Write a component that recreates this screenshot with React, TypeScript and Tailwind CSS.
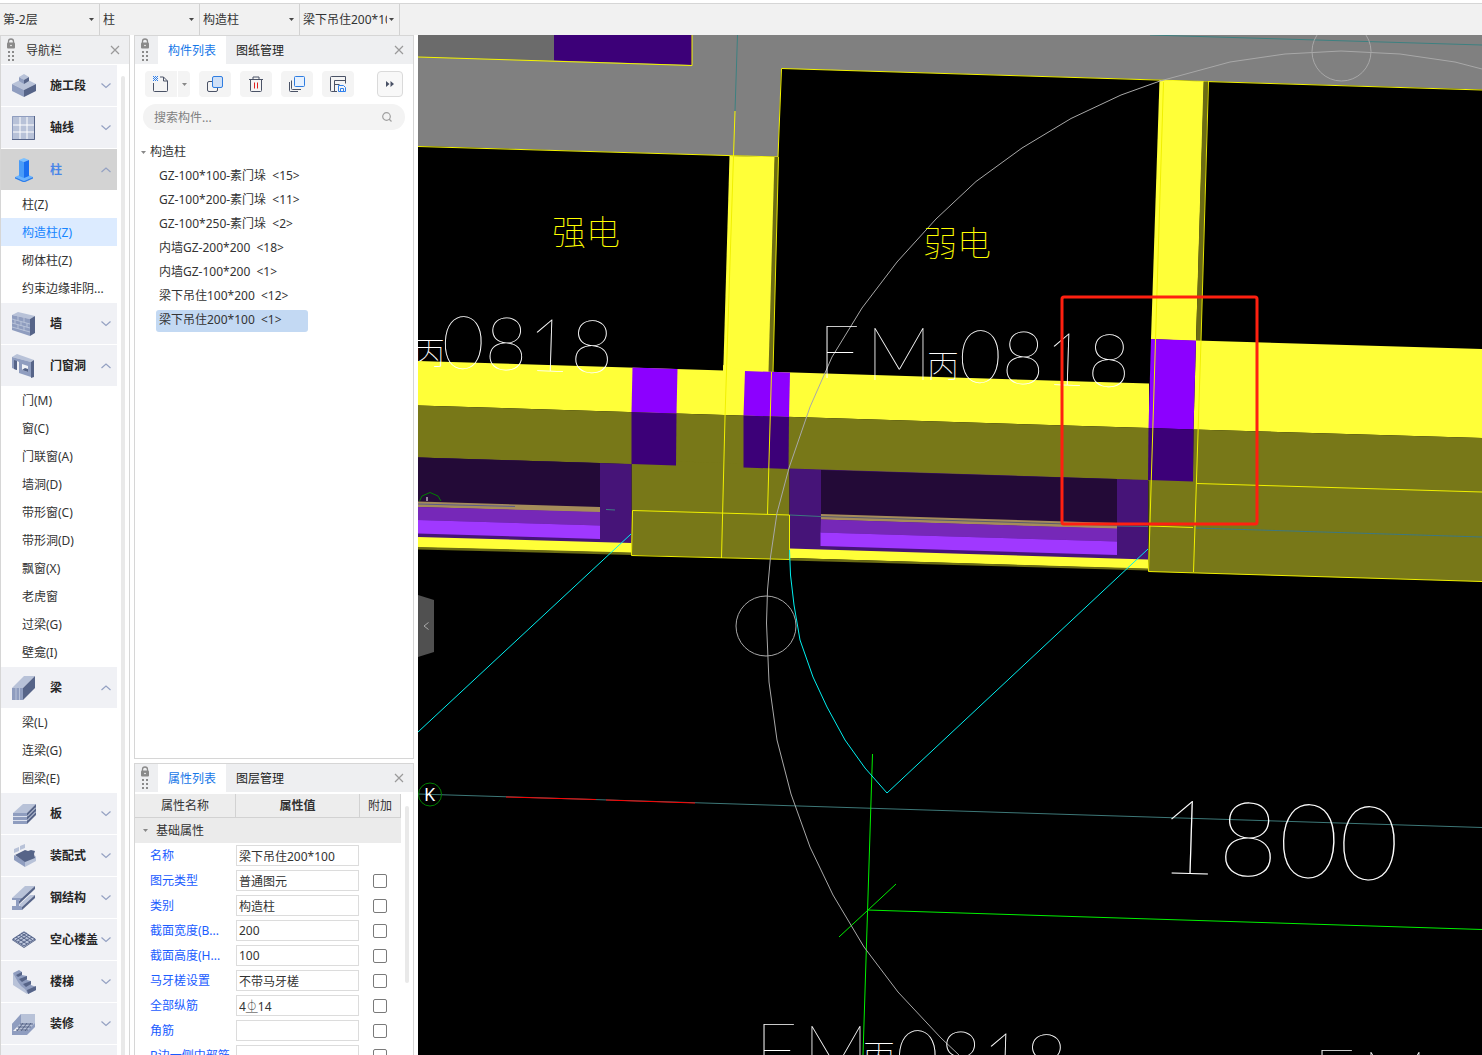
import React from "react";

type NavGroup = {
  name: string;
  icon: React.ReactNode;
  open?: boolean;
  active?: boolean;
  items?: string[];
};

const LIGHT = "#b8c2d8";
const MID = "#8f9dbf";
const DARK = "#566488";

const SectionIcon = () => (
  <svg viewBox="0 0 24 24" className="size-6">
    <path d="M0 10 12 4l12 6-12 6z" fill={LIGHT} />
    <path d="M0 10l12 6v7L0 17z" fill={MID} />
    <path d="M24 10l-12 6v7l12-6z" fill={DARK} />
    <path d="M7 3l5-3 5 3-5 3z" fill={LIGHT} />
    <path d="M7 3l5 3v4L7 7z" fill={MID} />
    <path d="M17 3l-5 3v4l5-3z" fill={DARK} />
  </svg>
);

const AxisIcon = () => (
  <svg viewBox="0 0 24 24" className="size-6">
    <path d="M0 0h23v24H0z" fill={LIGHT} />
    <path d="M8 1v22M15 1v22M1 9h21M1 16h21" stroke="#fff" />
    <path d="M.5.5h22v23H.5z" fill="none" stroke={MID} />
    <path d="M22.5 0v23.5H0" fill="none" stroke={DARK} />
  </svg>
);

const ColumnIcon = () => (
  <svg viewBox="0 0 24 24" className="size-6">
    <path d="M3 19l9-4 9 4-9 4z" fill="#6ab4ff" />
    <path d="M3 19l9 4v1.500l-9-4zM21 19l-9 4v1.500l9-4z" fill="#2b7fee" />
    <path d="M7 2l5-2 5 2-5 2z" fill="#7cc0ff" />
    <path d="M7 2l5 2v16l-5-2z" fill="#4a9cf8" />
    <path d="M17 2l-5 2v16l5-2z" fill="#1a6ff0" />
  </svg>
);

const WallIcon = () => (
  <svg viewBox="0 0 24 24" className="size-6">
    <path d="M0 3l6-3 17 4-5 3z" fill={LIGHT} />
    <path d="M0 3l18 4v17L0 18z" fill={MID} />
    <path d="M18 7l5-3v17l-5 3z" fill={DARK} />
    <path d="M0 7l18 5M0 11l18 5M0 15l18 5M6 4v5M12 6v4M3 8v4M9 10v4M15 11v4M6 13v4M12 14v5" stroke={LIGHT} />
  </svg>
);

const OpeningIcon = () => (
  <svg viewBox="0 0 24 24" className="size-6">
    <path d="M0 3l5-3 17 6-3 2z" fill={LIGHT} />
    <path d="M0 3l19 5v15L7 19V8L5 7v9l-5-2z" fill={MID} />
    <path d="M19 8l3-2v17l-3 1z" fill={DARK} />
    <path d="M10 10l6 2v6l-6-2z" fill="#eff1f6" />
    <path d="M2 6l3 1v9l-3-1zM10 16l3-2 3 1v3z" fill={DARK} />
  </svg>
);

const BeamIcon = () => (
  <svg viewBox="0 0 24 24" className="size-6">
    <path d="M0 12L12 0h11L11 12z" fill={LIGHT} />
    <path d="M0 12h11v12H0z" fill={MID} />
    <path d="M11 12L23 0v12L11 24z" fill={DARK} />
    <path d="M4 12v12M7.500 12v12" stroke={LIGHT} />
  </svg>
);

const SlabIcon = () => (
  <svg viewBox="0 0 24 24" className="size-6">
    <path d="M1 11L11 2h13l-9 9z" fill={LIGHT} />
    <path d="M1 11h14v11H1z" fill={MID} />
    <path d="M15 11l9-9v11l-9 9z" fill={DARK} />
    <path d="M1 14.500h14l9-9M1 18.500h14l9-9" fill="none" stroke="#dde2ee" />
  </svg>
);

const PrecastIcon = () => (
  <svg viewBox="0 0 24 24" className="size-6">
    <path d="M2 11l11 6v6L2 16z" fill={MID} />
    <path d="M13 17l11-5v5l-11 6z" fill={LIGHT} />
    <path d="M3 11l10-5 3 1 3-1 4 1-1 3 1 4-10 4z" fill={DARK} />
    <path d="M2 5l5-2v4L2 9zM8 2l5-2v4L8 6z" fill={LIGHT} />
  </svg>
);

const SteelIcon = () => (
  <svg viewBox="0 0 24 24" className="size-6">
    <path d="M0 12L13 0h10L10 12z" fill={LIGHT} />
    <path d="M0 12h10v2H0zM4 14h3v6H4zM0 20h10v4H0z" fill={MID} />
    <path d="M10 12L23 0v3L7 18v-3z" fill={DARK} />
    <path d="M7 19L18 9h5L10 21z" fill={LIGHT} />
    <path d="M10 21L23 9v3L10 24z" fill={DARK} />
  </svg>
);

const HollowIcon = () => (
  <svg viewBox="0 0 24 24" className="size-6">
    <path d="M0 11l12-8 12 8-12 8z" fill={LIGHT} />
    <path d="M1 11l11-7 11 7-11 7zM4 9l11 7M7 7l11 7M9 5l11 7M20 9L9 16M17 7L6 14M15 5L4 12" fill="none" stroke={DARK} />
    <path d="M0 11l12 8 12-8v1l-12 8-12-8z" fill={DARK} />
  </svg>
);

const StairIcon = () => (
  <svg viewBox="0 0 24 24" className="size-6">
    <path d="M1 3l14 13v8L1 15z" fill={LIGHT} />
    <path d="M1 3l6-3 3 2v3l5 1v4l4 1v4l5 2v3l-8 4-3-5-4-3-3-4z" fill={MID} />
    <path d="M4 5l6-3v3l-4 2zM7 9l8-3v3l-5 3zM11 14l8-3v3l-5 3zM15 20l9-4v4l-8 4z" fill={DARK} />
  </svg>
);

const FinishIcon = () => (
  <svg viewBox="0 0 24 24" className="size-6">
    <path d="M0 12L9 2h14v10l-9 10z" fill={LIGHT} />
    <path d="M0 12L9 2v9L0 20z" fill={MID} />
    <path d="M0 19h15l8-8v4l-8 8H0z" fill={MID} />
    <path d="M8 12h13M6 15h13M4 18h12M11 11l-6 8M15 11l-6 8M19 11l-6 8" stroke={DARK} />
  </svg>
);

const navGroups: NavGroup[] = [
  { name: "施工段", icon: <SectionIcon /> },
  { name: "轴线", icon: <AxisIcon /> },
  {
    name: "柱",
    icon: <ColumnIcon />,
    open: true,
    active: true,
    items: ["柱(Z)", "构造柱(Z)", "砌体柱(Z)", "约束边缘非阴..."],
  },
  { name: "墙", icon: <WallIcon /> },
  {
    name: "门窗洞",
    icon: <OpeningIcon />,
    open: true,
    items: [
      "门(M)",
      "窗(C)",
      "门联窗(A)",
      "墙洞(D)",
      "带形窗(C)",
      "带形洞(D)",
      "飘窗(X)",
      "老虎窗",
      "过梁(G)",
      "壁龛(I)",
    ],
  },
  {
    name: "梁",
    icon: <BeamIcon />,
    open: true,
    items: ["梁(L)", "连梁(G)", "圈梁(E)"],
  },
  { name: "板", icon: <SlabIcon /> },
  { name: "装配式", icon: <PrecastIcon /> },
  { name: "钢结构", icon: <SteelIcon /> },
  { name: "空心楼盖", icon: <HollowIcon /> },
  { name: "楼梯", icon: <StairIcon /> },
  { name: "装修", icon: <FinishIcon /> },
];

const components = [
  { name: "GZ-100*100-素门垛", count: 15 },
  { name: "GZ-100*200-素门垛", count: 11 },
  { name: "GZ-100*250-素门垛", count: 2 },
  { name: "内墙GZ-200*200", count: 18 },
  { name: "内墙GZ-100*200", count: 1 },
  { name: "梁下吊住100*200", count: 12 },
  { name: "梁下吊住200*100", count: 1 },
];

const properties = [
  { name: "名称", value: "梁下吊住200*100", extra: false },
  { name: "图元类型", value: "普通图元", extra: true },
  { name: "类别", value: "构造柱", extra: true },
  { name: "截面宽度(B...", value: "200", extra: true },
  { name: "截面高度(H...", value: "100", extra: true },
  { name: "马牙槎设置", value: "不带马牙槎", extra: true },
  { name: "全部纵筋", value: "4⏂14", extra: true },
  { name: "角筋", value: "", extra: true },
  { name: "B边一侧中部筋", value: "", extra: true },
];

const Grip = () => (
  <svg viewBox="0 0 10 24" className="h-6 w-[10px] shrink-0" fill="#8a8a8a">
    <path d="M2.500 5V3.500a2.500 2.500 0 0 1 5 0V5" fill="none" stroke="#8a8a8a" strokeWidth="1.300" />
    <rect x="1" y="4.500" width="8" height="6" rx="1" />
    <circle cx="5" cy="7.500" r=".8" fill="#fff" />
    <path d="M2 13h2v2H2zM6 13h2v2H6zM2 17h2v2H2zM6 17h2v2H6zM2 21h2v2H2zM6 21h2v2H6z" />
  </svg>
);

const CloseButton = ({ label }: { label: string }) => (
  <button type="button" aria-label={label} className="ml-auto mr-2 flex size-3 items-center justify-center">
    <svg viewBox="0 0 10 10" className="size-[10px]" stroke="#9a9a9a" strokeWidth="1.200">
      <path d="M1 1l8 8M9 1L1 9" />
    </svg>
  </button>
);

const Caret = ({ className = "" }: { className?: string }) => (
  <svg viewBox="0 0 5 3" className={`h-[3px] w-[5px] ${className}`}>
    <path d="M0 0h5L2.500 3z" fill="currentColor" />
  </svg>
);

const PickBox = ({ label, value }: { label: string; value: string }) => (
  <div className="relative flex h-full w-[100px] items-center border-r border-[#d2d2d2] pl-[3px]">
    <select aria-label={label} className="h-full w-[84px] appearance-none overflow-hidden bg-transparent text-[#333] outline-none">
      <option>{value}</option>
    </select>
    <Caret className="absolute right-[5px] text-[#444]" />
  </div>
);

const PanelTabs = ({ tabs, close }: { tabs: string[]; close: string }) => (
  <div className="flex h-7 shrink-0 items-center bg-[#eeeff1]">
    <div className="flex w-[23px] justify-center pr-[3px]">
      <Grip />
    </div>
    {tabs.map((tab, i) => (
      <button
        key={tab}
        type="button"
        className={`h-full w-[68px] pt-[2px] ${i === 0 ? "bg-white text-[#1677e8]" : "text-[#222]"}`}
      >
        {tab}
      </button>
    ))}
    <CloseButton label={close} />
  </div>
);

const NavBar = () => (
  <nav className="flex w-[130px] shrink-0 flex-col overflow-hidden border border-b-0 border-[#d6d6d6] bg-white">
    <div className="flex h-7 shrink-0 items-center bg-[#eeeff1] pl-[5px]">
      <Grip />
      <span className="ml-[10px] pt-[2px] text-[#333]">导航栏</span>
      <CloseButton label="关闭导航栏" />
    </div>
    <div className="flex min-h-0 flex-1">
      <ul className="w-[116px] overflow-hidden">
        {navGroups.map((group) => (
          <li key={group.name} className="pt-px">
            <button
              type="button"
              className={`flex h-[41px] w-full items-center pl-[11px] font-bold ${
                group.active ? "bg-[#d3d3d3] text-[#4a86e8]" : "bg-[#f0f1f5] text-[#262626]"
              }`}
            >
              {group.icon}
              <span className="ml-[14px] w-[51px] text-left whitespace-nowrap">{group.name}</span>
              <svg viewBox="0 0 10 6" className="h-[6px] w-[10px] shrink-0" fill="none" stroke="#94a1c2" strokeWidth="1.200">
                <path d={group.open ? "M.5 5L5 1l4.500 4" : "M.5.5L5 4.500 9.500.5"} />
              </svg>
            </button>
            {group.items && (
              <ul>
                {group.items.map((item) => (
                  <li key={item}>
                    <a
                      href="#"
                      className={`block h-7 pl-[21px] leading-[30px] whitespace-nowrap ${
                        item === "构造柱(Z)" ? "bg-[#dcebff] text-[#1685ff]" : "text-[#333]"
                      }`}
                    >
                      {item}
                    </a>
                  </li>
                ))}
              </ul>
            )}
          </li>
        ))}
        <li className="pt-px">
          <div className="h-[41px] bg-[#f0f1f5]" />
        </li>
      </ul>
      <div className="mt-3 ml-1 w-1 rounded-t bg-[#e9e9e9]" />
    </div>
  </nav>
);

const toolStyle = "flex h-[26px] w-8 items-center justify-center rounded bg-[#f4f4f4]";

const Toolbar = () => (
  <div className="flex h-[26px] items-center gap-[9px]">
    <div className="flex gap-px">
      <button type="button" aria-label="新建" className="flex h-[26px] w-8 items-center justify-center rounded-l bg-[#f4f4f4]">
        <svg viewBox="0 0 16 16" className="size-4" fill="none" stroke="#4a5266">
          <path d="M.5 7v7.500a1 1 0 0 0 1 1h12a1 1 0 0 0 1-1V5l-4-4H7M10.500 1v4h4" />
          <path d="M0 .5h1M2 .5h1M4 .5h1M1 1.500h1M3 1.500h1M0 2.500h1M2 2.500h1M4 2.500h1M1 3.500h1M3 3.500h1M0 4.500h1M2 4.500h1M4 4.500h1" stroke="#2f80ed" />
        </svg>
      </button>
      <button type="button" aria-label="新建选项" className="flex h-[26px] w-3 items-center justify-center rounded-r bg-[#f4f4f4]">
        <Caret className="text-[#888]" />
      </button>
    </div>
    <button type="button" aria-label="复制" className={toolStyle}>
      <svg viewBox="0 0 16 16" className="size-4" fill="none" stroke="#4a5266">
        <rect x=".5" y="5.500" width="10" height="10" rx="1.500" />
        <rect x="5.500" y=".5" width="10" height="11" rx="1.500" fill="#cfe0f7" stroke="#2f7de0" />
      </svg>
    </button>
    <button type="button" aria-label="删除" className={toolStyle}>
      <svg viewBox="0 0 16 16" className="size-4" fill="none" stroke="#4a5266">
        <path d="M1 3.500h14M5 3V1h6v2M2.500 3.500v11a1 1 0 0 0 1 1h9a1 1 0 0 0 1-1v-11" />
        <path d="M6.500 6.500v6M9.500 6.500v6" stroke="#e02020" />
      </svg>
    </button>
    <button type="button" aria-label="层间复制" className={toolStyle}>
      <svg viewBox="0 0 16 16" className="size-4" fill="none" stroke="#4a5266">
        <path d="M.5 6v8.500a1 1 0 0 0 1 1H9M2.500 4.500v8a1 1 0 0 0 1 1H12" />
        <rect x="5.500" y=".5" width="10" height="10" rx="1" fill="#e6f1ff" stroke="#2f7de0" />
      </svg>
    </button>
    <button type="button" aria-label="存档" className={toolStyle}>
      <svg viewBox="0 0 16 16" className="size-4" fill="none" stroke="#4a5266">
        <path d="M7 15.500H1.500a1 1 0 0 1-1-1v-13a1 1 0 0 1 1-1h14v7M4.500 15V4.500h11M4.500 8.500h5" />
        <path d="M8.500 9.500h5l2 2v4h-7zM10.500 15v-2.500h3V15" stroke="#2f80ed" />
      </svg>
    </button>
    <button type="button" aria-label="更多" className="ml-auto flex size-[26px] items-center justify-center rounded border border-[#dadada] bg-[#f8f8f8]">
      <svg viewBox="0 0 8 6" className="h-[6px] w-2" fill="#4a5266">
        <path d="M0 0l3.500 3L0 6zM4.500 0L8 3 4.500 6z" />
      </svg>
    </button>
  </div>
);

const ComponentPanel = () => (
  <section className="flex h-[724px] shrink-0 flex-col border border-[#d6d6d6] bg-white">
    <PanelTabs tabs={["构件列表", "图纸管理"]} close="关闭构件列表" />
    <div className="px-2 pt-[7px]">
      <div className="px-[2px]">
        <Toolbar />
      </div>
      <label className="mt-[7px] flex h-[26px] items-center rounded-full bg-[#f3f3f3] pr-[13px] pl-[11px]">
        <input
          type="text"
          aria-label="搜索构件"
          placeholder="搜索构件..."
          className="min-w-0 flex-1 bg-transparent pt-[2px] outline-none placeholder:text-[#808080]"
        />
        <svg viewBox="0 0 10 10" className="size-[10px]" fill="none" stroke="#a0a0a0" strokeWidth="1.200">
          <circle cx="4.500" cy="4.500" r="3.800" />
          <path d="M7 7l2.500 2.500" />
        </svg>
      </label>
    </div>
    <div className="mt-[10px] pl-[6px] text-[#333]">
      <div className="flex h-6 items-center">
        <Caret className="text-[#888]" />
        <span className="ml-1">构造柱</span>
      </div>
      <ul className="pl-[15px]">
        {components.map(({ name, count }, i) => (
          <li
            key={name}
            className={`my-[2px] h-[22px] w-[152px] rounded-[3px] pl-[3px] leading-5 ${
              i === components.length - 1 ? "bg-[#c3d9f3]" : ""
            }`}
          >
            {name} <span className="ml-[3px]">&lt;{count}&gt;</span>
          </li>
        ))}
      </ul>
    </div>
  </section>
);

const PropertyPanel = () => (
  <section className="mt-1 flex min-h-0 flex-1 flex-col overflow-hidden border border-b-0 border-[#d6d6d6] bg-white">
    <PanelTabs tabs={["属性列表", "图层管理"]} close="关闭属性列表" />
    <div className="mt-[2px] flex min-h-0 flex-1 overflow-hidden">
      <table className="w-[266px] table-fixed border-separate border-spacing-0 self-start text-[#333]">
        <colgroup>
          <col className="w-[101px]" />
          <col className="w-[124px]" />
          <col />
        </colgroup>
        <thead>
          <tr className="h-6 bg-[#ededed]">
            <th className="border-r border-b border-[#d2d2d2] p-0 font-normal">属性名称</th>
            <th className="border-r border-b border-[#d2d2d2] p-0 font-bold">属性值</th>
            <th className="border-r border-b border-[#d2d2d2] p-0 font-normal">附加</th>
          </tr>
        </thead>
        <tbody>
          <tr className="h-[25px] bg-[#ebebeb]">
            <td colSpan={3} className="p-0">
              <div className="flex items-center pl-2">
                <Caret className="text-[#888]" />
                <span className="ml-2">基础属性</span>
              </div>
            </td>
          </tr>
          {properties.map((prop, i) => (
            <tr key={prop.name} className="h-[25px]">
              <td className="overflow-hidden p-0 pl-[15px] whitespace-nowrap text-[#1a5cff]">
                <label htmlFor={`prop-${i}`}>{prop.name}</label>
              </td>
              <td className="p-0">
                <input
                  id={`prop-${i}`}
                  type="text"
                  defaultValue={prop.value}
                  className="block h-[21px] w-[123px] border border-[#dcdcdc] bg-white px-[2px] outline-none"
                />
              </td>
              <td className="p-0 pr-[2px]">
                {prop.extra && (
                  <input
                    type="checkbox"
                    aria-label={`附加 ${prop.name}`}
                    className="mx-auto block size-[14px] appearance-none rounded-[2px] border border-[#7a7a7a] bg-white"
                  />
                )}
              </td>
            </tr>
          ))}
        </tbody>
      </table>
      <div className="mt-3 ml-1 h-[177px] w-1 rounded bg-[#e9e9e9]" />
    </div>
  </section>
);

const YELLOW = "#ffff38";
const OLIVE = "#787818";
const PURPLE = "#8c00ff";
const PURPLE_DARK = "#3c0078";

const ModelView = () => (
  <svg
    viewBox="418 35 1064 1020"
    preserveAspectRatio="xMinYMin slice"
    className="block h-full w-full"
    role="img"
    aria-label="模型视图"
  >
    {/* slab */}
    <path d="M418 35H1482V89.500L781 68.500L778 157L418 146z" fill="#808080" />
    <path d="M418 35H554V61L418 57z" fill="#6b6b6b" />
    <path d="M554 35H692V65L554 60.500z" fill={PURPLE_DARK} />
    <g fill="none" stroke="#f5f500">
      <path d="M418 57L692 65.500V35" />
      <path d="M418 146.500L778 157L781.500 68.500L1482 90M735 111L733.500 156" />
    </g>
    <path d="M737.500 35L735 111M1150 35L1482 45" stroke="#3d8080" />

    {/* walls */}
    <path d="M729.500 156L775 157L770 380H723z" fill={YELLOW} />
    <path d="M774.500 157H778.500L773 372H768.500z" fill="#6b6b14" />
    <path d="M778.500 157L773 372" stroke="#e6e600" />
    <path d="M1159.500 80L1204 81.500L1196 341L1151 339z" fill={YELLOW} />
    <path d="M1203.500 81.500H1208L1201 341H1196z" fill="#6b6b14" />
    <path d="M1208.500 81.500L1201 341" stroke="#e6e600" />
    <path d="M418 361L1149 383.500V428L418 405.500z" fill={YELLOW} />
    <path d="M723 365L745 371V400H723z" fill={YELLOW} />
    <path d="M418 405.500L1149 428V480.500L418 457.500z" fill={OLIVE} />
    <path d="M631.500 460L789.500 465V559.500L631.500 555z" fill={OLIVE} />
    <path d="M1196 340.500L1482 349V438L1193.500 429.500z" fill={YELLOW} />
    <path d="M1193.500 429.500L1482 438V581.500L1148.500 571.500V470H1193z" fill={OLIVE} />

    {/* columns */}
    <path d="M632.500 367.500L677.500 369L676.500 413.500L631.500 412z" fill={PURPLE} />
    <path d="M631.500 412L676.500 413.500L676 465.500L631.500 464z" fill={PURPLE_DARK} />
    <path d="M745 371L790 372.500L789 417L743.500 415.500z" fill={PURPLE} />
    <path d="M743.500 415.500L789 417L788.500 469L743.500 467.500z" fill={PURPLE_DARK} />
    <path d="M1151 339L1196 340.500L1193.500 429.500L1148.500 428z" fill={PURPLE} />
    <path d="M1148.500 428L1193.500 429.500L1193 481.500L1148 480z" fill={PURPLE_DARK} />

    {/* left window */}
    <path d="M418 457.500L631.500 464V544L418 538z" fill="#461478" />
    <path d="M418 457.500L600 463V508L418 502z" fill="#230a37" />
    <path d="M418 501.500L600 507V512.500L418 507z" fill="#a58c5a" />
    <path d="M418 507L600 512V525.500L418 520z" fill="#7628b8" />
    <path d="M418 520L600 525.500V539L418 533.500z" fill="#a038ff" />
    <path d="M418 537L631.500 543V553L418 547.500z" fill={YELLOW} />
    <path d="M418 547L631.500 552.500V555L418 549.500z" fill="#6b6b14" />
    <path d="M418 504L515 506.500" stroke="#5a5a8c" />
    <path d="M606 509.500L615 510" stroke="#3d8080" />

    {/* right window */}
    <path d="M789.500 468.500L1148 480V560L789.500 549.500z" fill="#461478" />
    <path d="M821 470L1117 479V524L821 515z" fill="#230a37" />
    <path d="M821 514L1117 523V529L821 519.500z" fill="#a58c5a" />
    <path d="M821 519.500L1117 528.500V541.500L820.500 532.500z" fill="#7628b8" />
    <path d="M820.500 532.500L1117 541.500V555L820.500 546z" fill="#a038ff" />
    <path d="M789.500 548.500L1148 559.500V569L789.500 558z" fill={YELLOW} />
    <path d="M789.500 558L1148 568.500V570.500L789.500 560.500z" fill="#6b6b14" />
    <path d="M821 516.500L1117 525.500" stroke="#5a5a6e" />
    <path d="M790 515L821 516.500M1117 526L1148 526.500M1195 528L1482 537" stroke="#3d7880" />

    {/* wall edges */}
    <g fill="none" stroke="#f0f000">
      <path d="M632.500 510.500L789.500 515V559.500L631.500 555.500z" />
      <path d="M733.500 156L725 417L721.500 558M771.500 372L767.500 514" />
      <path d="M1163.500 82L1155.500 340L1148.500 571.500L1482 581.500" />
      <path d="M1201 341L1193.500 572M1197 483.500L1482 492M1149 526L1193 527.500" />
    </g>

    {/* axes and dimension lines */}
    <path d="M418 794L1482 827.500" stroke="#3d7878" />
    <path d="M506 797L596 799.500M606 800L695 803" stroke="#ff0000" />
    <circle cx="430" cy="794.500" r="11.500" fill="none" stroke="#008000" />
    <path d="M419.500 501L422 496L430 492.500L438 496L441 501" fill="none" stroke="#008000" />
    <path d="M427 497V501" stroke="#fff" />
    <path d="M872.500 754L863 1055M896 884L839 937M867 910L1482 929.500" stroke="#00f000" />

    {/* door swings */}
    <path
      d="M631 534L418 732M789.500 550L790.500 575L794 605L800 640L813 677L827 707L845 740L865 768L887 793L1148 549"
      fill="none"
      stroke="#00f0f0"
    />
    <g fill="none" stroke="#a8a8a8">
      <path d="M1482 69L1455 62L1400 54L1341 51L1285 54L1230 62L1160 81L1121 95L1071 118.500L1022 148L976 181.500L936 219L897 262L862 308L832 357L810 407L789 468L777 513L770.500 557L767.500 590L766.500 623L769 682L777 740L791 794L810 847L833 895L864 947L898 992L941 1038L959 1055" />
      <circle cx="1341.500" cy="51.500" r="29.500" />
      <circle cx="766" cy="626" r="30" />
    </g>

    {/* labels */}
    <g className="font-thin" fontFamily="Lato, 'Noto Sans CJK SC', sans-serif" fill="#fff">
      <g fill="#ffff00" fontSize="34">
        <text x="552" y="245">强电</text>
        <text x="923" y="256">弱电</text>
      </g>
      <g fontSize="32">
        <text x="413" y="364">丙</text>
        <text x="927" y="377">丙</text>
        <text x="863" y="1067">丙</text>
      </g>
      <g fontSize="74">
        <text x="441" y="368" transform="rotate(1.8 441 368)">0818</text>
        <text x="818" y="378">F</text>
        <text x="866" y="380">M</text>
        <text x="958" y="382" transform="rotate(1.8 958 382)">0818</text>
        <text x="755" y="1076">F</text>
        <text x="803" y="1078">M</text>
        <text x="895" y="1082" transform="rotate(1.8 895 1082)">0818</text>
        <text x="1313" y="1102">F</text>
        <text x="1362" y="1104">M</text>
      </g>
      <text x="1157" y="873" fontSize="104" transform="rotate(1.8 1157 873)">1800</text>
    </g>
    <text x="424" y="801" fontSize="18" fontFamily="'Noto Sans', sans-serif" fill="#fff">K</text>

    {/* markup frame */}
    <rect x="1062" y="297" width="195" height="227" rx="2" fill="none" stroke="#ff2010" strokeWidth="3" />
  </svg>
);

const App = () => (
  <div className="flex h-screen flex-col overflow-hidden bg-white font-['Noto_Sans','Noto_Sans_CJK_SC',sans-serif] text-[12px] leading-5">
    <header className="mt-[3px] flex h-8 shrink-0 border-t border-[#d6d6d6] bg-[#f1f1f1]">
      <PickBox label="楼层" value="第-2层" />
      <PickBox label="构件类别" value="柱" />
      <PickBox label="构件类型" value="构造柱" />
      <PickBox label="构件" value="梁下吊住200*100" />
    </header>
    <div className="flex min-h-0 flex-1">
      <NavBar />
      <div className="mr-1 ml-1 flex w-[280px] shrink-0 flex-col">
        <ComponentPanel />
        <PropertyPanel />
      </div>
      <main className="relative min-w-0 flex-1 overflow-hidden bg-black">
        <ModelView />
        <button
          type="button"
          aria-label="收起面板"
          className="absolute top-[560px] left-0 flex h-[62px] w-4 items-center justify-center bg-[#505050] [clip-path:polygon(0_0,100%_8%,100%_92%,0_100%)]"
        >
          <svg viewBox="0 0 6 8" className="h-2 w-[6px]" fill="none" stroke="#aaa">
            <path d="M5.500.5L1 4l4.500 3.500" />
          </svg>
        </button>
      </main>
    </div>
  </div>
);

export default App;
